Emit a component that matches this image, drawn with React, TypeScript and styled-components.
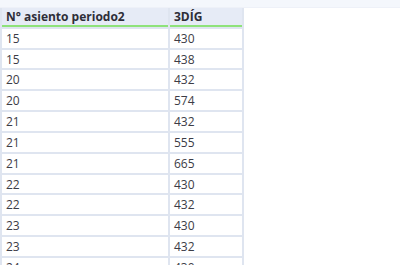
import React, { FC } from 'react';
import styled, { createGlobalStyle } from 'styled-components';

const GlobalStyle = createGlobalStyle`
    body {
        margin: 0;
        background: #ffffff;
        font-family: "Open Sans", "Noto Sans", sans-serif;
    }
`;

const TopStrip = styled.div`
    height: 7px;
    background: #f4f7fc;
    border-bottom: 1px solid #eef1f8;
`;

const Grid = styled.div`
    display: grid;
    grid-template-columns: 166px 72px;
    grid-auto-rows: 18.84px;
    gap: 2px;
    padding: 0 2px 2px 2px;
    width: fit-content;
    background: #dfe5f0;
`;

const HeadCell = styled.div`
    box-sizing: border-box;
    background: #e6ebf6;
    border-bottom: 2px solid #8ee27a;
    padding-left: 4px;
    font-size: 12px;
    font-weight: 700;
    color: #2e2e38;
    display: flex;
    align-items: center;
`;

const Cell = styled.div`
    background: #ffffff;
    padding-left: 4px;
    font-size: 12px;
    color: #3c3c46;
    display: flex;
    align-items: center;
`;

const rows: [number, number][] = [
    [15, 430],
    [15, 438],
    [20, 432],
    [20, 574],
    [21, 432],
    [21, 555],
    [21, 665],
    [22, 430],
    [22, 432],
    [23, 430],
    [23, 432],
    [24, 430],
];

const App: FC = () => {
    return (
        <>
            <GlobalStyle />
            <TopStrip />
            <Grid>
                <HeadCell>N° asiento periodo2</HeadCell>
                <HeadCell>3DÍG</HeadCell>
                {rows.map(([a, b], i) => (
                    <React.Fragment key={i}>
                        <Cell>{a}</Cell>
                        <Cell>{b}</Cell>
                    </React.Fragment>
                ))}
            </Grid>
        </>
    );
};

export default App;
